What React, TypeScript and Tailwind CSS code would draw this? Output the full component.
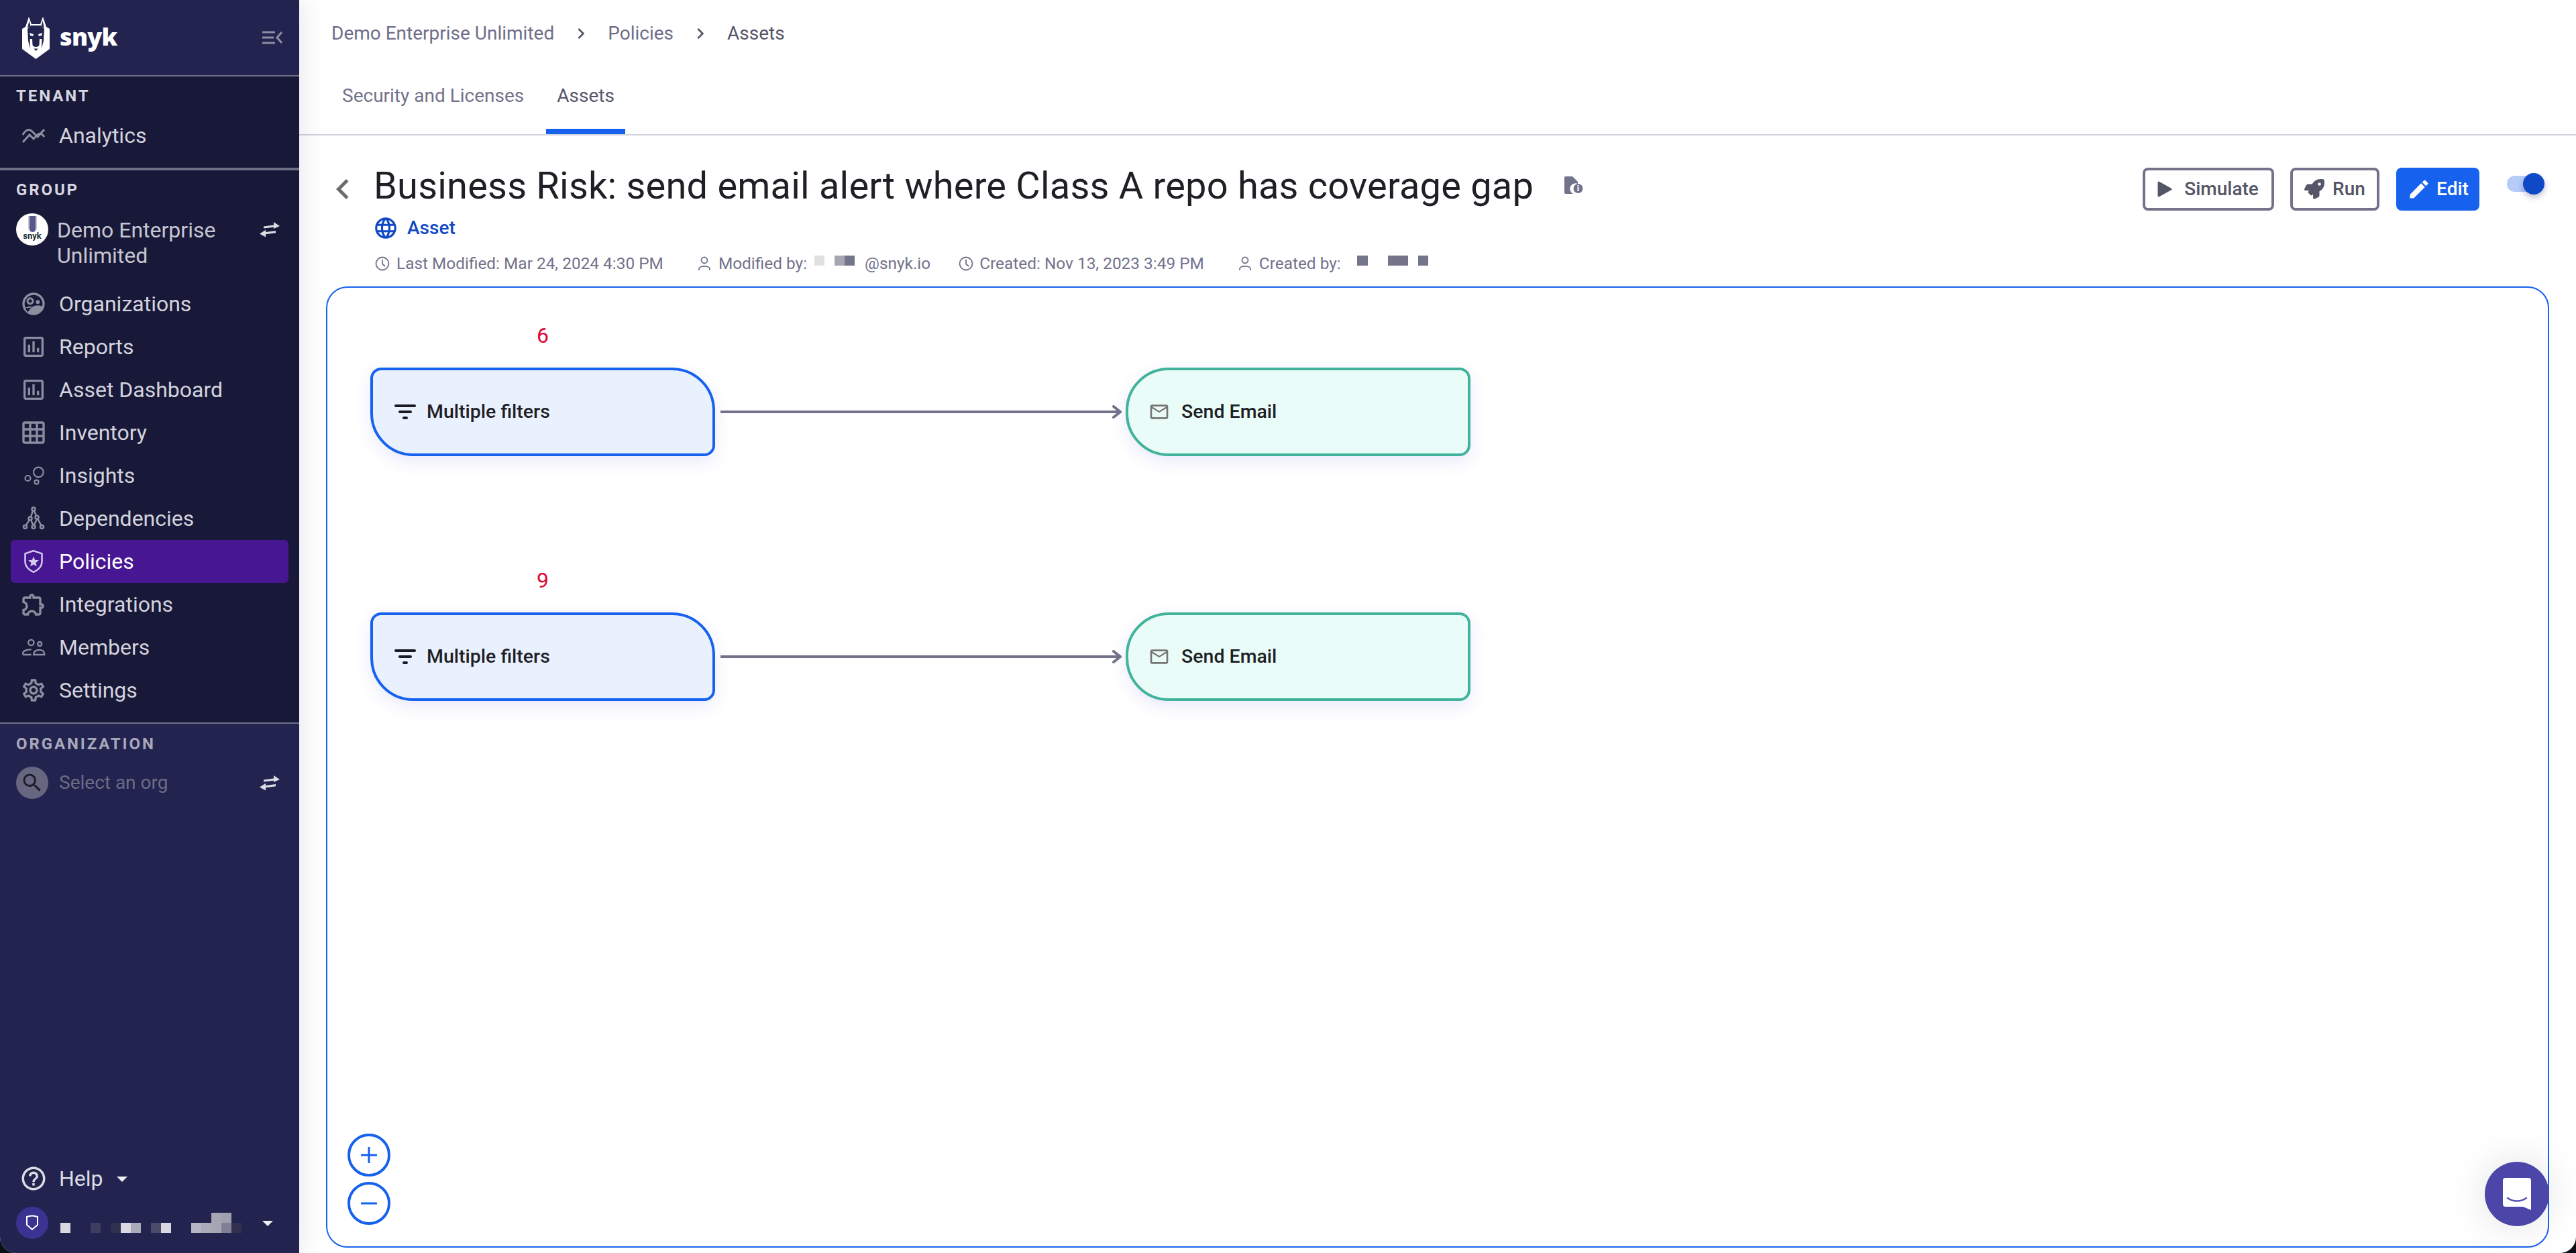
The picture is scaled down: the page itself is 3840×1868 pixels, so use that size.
import { ReactNode } from "react"
import {
  MdEdit,
  MdHelpOutline,
  MdLanguage,
  MdOutlineAssessment,
  MdOutlineExtension,
  MdOutlineSettings,
  MdGridOn,
  MdSearch,
  MdOutlineMailOutline,
  MdChevronLeft,
  MdChevronRight,
} from "react-icons/md"
import { FaRocket } from "react-icons/fa"

const iconClass = "w-10 h-10 text-[#8d8da1] shrink-0"

const OrgIcon = () => (
  <svg viewBox="0 0 24 24" className={iconClass} fill="currentColor">
    <path d="M12 2a10 10 0 1 0 0 20 10 10 0 0 0 0-20zm0 2a8 8 0 0 1 7.700 10.200c-1.600-.6-3-.8-4.200-.8-3 0-5.800 1.700-7.700 4.800-.4.500-.8.900-1.100 1.100A8 8 0 0 1 4.800 15.500c1.300-.8 2.800-1.200 4.200-1.200.5 0 1 .1 1.400.2-.3.300-.6.600-.8.900C6 15.500 5 16 4.800 15.500A8 8 0 0 1 12 4z" />
    <circle cx="9" cy="9.500" r="2.400" fill="none" stroke="currentColor" strokeWidth="1.800" />
    <circle cx="15.800" cy="10.300" r="1.700" />
  </svg>
)

const AnalyticsIcon = () => (
  <svg viewBox="0 0 34 24" className="w-[34px] h-6 mx-[3px] text-[#8d8da1] shrink-0" fill="none" stroke="currentColor" strokeWidth="3">
    <path d="M1 11 C6 2 11 2 15 6 L23 14 L33 3" />
    <path d="M1 22 L11 11 L17 17 L24 10 C27 8 30 10 33 14" />
  </svg>
)

const InsightsIcon = () => (
  <svg viewBox="0 0 24 24" className={iconClass} fill="none" stroke="currentColor" strokeWidth="1.300">
    <circle cx="16.400" cy="9" r="4.400" />
    <circle cx="6.900" cy="14.400" r="2.400" />
    <circle cx="14.700" cy="17.800" r="1.800" />
  </svg>
)

const DependenciesIcon = () => (
  <svg viewBox="0 0 24 24" className={iconClass} fill="none" stroke="currentColor" strokeWidth="1.500">
    <circle cx="12" cy="3.600" r="1.500" />
    <circle cx="9" cy="12" r="1.500" />
    <circle cx="15" cy="11" r="1.500" />
    <circle cx="4.500" cy="19.500" r="1.500" />
    <circle cx="12" cy="19.500" r="1.500" />
    <circle cx="19.500" cy="19.500" r="1.500" />
    <path d="M11.400 5 L9.600 10.600 M12.600 5 L14.400 9.600 M8.200 13.300 L5.200 18.200 M9.700 13.300 L11.700 18 M15.800 12.300 L18.800 18.200 M15 12.500 L12.400 18" />
  </svg>
)

const PolicyIcon = () => (
  <svg viewBox="0 0 24 24" className="w-10 h-10 text-[#d5cbea] shrink-0">
    <path d="M12 2.500 L19.500 5 V12 C19.500 16.500 16 20 12 21.500 C8 20 4.500 16.500 4.500 12 V5 Z" fill="none" stroke="currentColor" strokeWidth="1.500" />
    <path d="M12 7.500 L13.300 10.700 L16.700 11 L14.100 13.200 L14.900 16.500 L12 14.700 L9.100 16.500 L9.900 13.200 L7.300 11 L10.700 10.700 Z" fill="currentColor" />
  </svg>
)

const MembersIcon = () => (
  <svg viewBox="0 0 24 24" className={iconClass} fill="none" stroke="currentColor" strokeWidth="1.400">
    <circle cx="9.800" cy="7.800" r="2.500" />
    <circle cx="17.500" cy="9" r="1.800" />
    <path d="M2.500 18.500 V17 C3 15 6.500 13.800 10 14 M2.500 18.600 H10" />
    <path d="M12 18.600 C12 15.500 14.500 14.300 17.500 14.300 C20 14.300 21.800 15.800 21.800 18.600 Z" />
  </svg>
)

const SwapIcon = ({ color = "#dcdce4" }: { color?: string }) => (
  <svg viewBox="0 0 30 24" className="w-[30px] h-6 shrink-0" fill={color}>
    <path d="M6 7.500 L21 5.500 V1 L30 7 L21 11 V8.700 L6 10.500 Z" />
    <path d="M24 14 L9 16 V12.800 L0 18.500 L9 23.500 V19.300 L24 17.200 Z" />
  </svg>
)

const Caret = () => <div className="w-0 h-0 border-x-[8px] border-x-transparent border-t-[8px] border-t-[#eeeef2]" />

const navItems: { label: string; icon: ReactNode; active?: boolean }[] = [
  { label: "Organizations", icon: <OrgIcon /> },
  { label: "Reports", icon: <MdOutlineAssessment className={iconClass} /> },
  { label: "Asset Dashboard", icon: <MdOutlineAssessment className={iconClass} /> },
  { label: "Inventory", icon: <MdGridOn className={iconClass} /> },
  { label: "Insights", icon: <InsightsIcon /> },
  { label: "Dependencies", icon: <DependenciesIcon /> },
  { label: "Policies", icon: <PolicyIcon />, active: true },
  { label: "Integrations", icon: <MdOutlineExtension className={iconClass} /> },
  { label: "Members", icon: <MembersIcon /> },
  { label: "Settings", icon: <MdOutlineSettings className={iconClass} /> },
]

const NavRow = ({ label, icon, active }: { label: string; icon: ReactNode; active?: boolean }) => (
  <div className={`h-16 mx-4 pl-[14px] flex items-center gap-[18px] rounded-md ${active ? "bg-[#471692] text-white" : "text-[#d3d3de]"}`}>
    {icon}
    <span className="text-[32px] leading-10">{label}</span>
  </div>
)

const SectionLabel = ({ children, className }: { children: ReactNode; className: string }) => (
  <div className={`text-2xl leading-6 font-bold tracking-[0.12em] px-6 ${className}`}>{children}</div>
)

const Logo = () => (
  <svg viewBox="0 0 41 63" className="w-[41px] h-[63px] shrink-0">
    {/* side panels and ears */}
    <path d="M10 0 L14 11 H27 L31 0 L36 15 L41 18 V48 L20.500 63 L0 48 V18 L5 15 Z" fill="#fff" />
    <path d="M10.500 6 L12.500 14 L8 17 Z M30.500 6 L28.500 14 L33 17 Z" fill="#232350" />
    {/* face */}
    <path d="M13.500 13 H27.500 L33 18 L32 36 L29 47 H12 L9 36 L8 18 Z" fill="#232350" />
    <path d="M11 24 L17 26 L16 29 L12 28 Z M30 24 L24 26 L25 29 L29 28 Z" fill="#fff" />
    <path d="M11.500 33 L15 33 L15.500 42 C16 44 18 45 20.500 45 C23 45 25 44 25.500 42 L26 33 L29.500 33 L29 46 L24 54 H17 L12 46 Z" fill="#fff" />
    <path d="M17.500 47.500 H23.500 L20.500 51 Z" fill="#232350" />
  </svg>
)

const Sidebar = () => (
  <aside className="w-[446px] h-full shrink-0 flex flex-col bg-[#232350] relative z-10 shadow-[0_0_36px_rgba(70,70,140,0.16)] font-['Roboto',sans-serif]">
    <div className="h-[114px] shrink-0 border-b-2 border-[#6f6f85] flex items-center pl-[33px] pr-[25px]">
      <Logo />
      <span className="ml-[15px] text-[36px] leading-[44px] font-extrabold tracking-[-0.02em] text-white font-['Open_Sans',sans-serif] mb-[2px]">snyk</span>
      <svg viewBox="0 0 30 20" className="w-[30px] h-5 ml-auto" fill="none" stroke="#8d8da1" strokeWidth="3">
        <path d="M0 2 H19 M0 10 H17 M0 18 H19 M29 2 L22 10 L29 18" />
      </svg>
    </div>
    <div className="h-[140px] shrink-0 bg-[#181838] border-b-4 border-[#6f6f85] pt-[17px]">
      <SectionLabel className="text-[#d6d6e0]">TENANT</SectionLabel>
      <div className="mt-[15px]">
        <NavRow label="Analytics" icon={<AnalyticsIcon />} />
      </div>
    </div>
    <div className="h-[825px] shrink-0 bg-[#181838] border-b-2 border-[#6f6f85] pt-[17px]">
      <SectionLabel className="text-[#d6d6e0]">GROUP</SectionLabel>
      <div className="flex items-start mt-[23px] pl-6 pr-[29px] h-[103px]">
        <div className="w-12 h-12 rounded-full bg-white flex flex-col items-center shrink-0 overflow-hidden pt-[4px]">
          <div className="w-[13px] h-[24px] bg-[#57578a] rounded-b-md border-x-2 border-[#c9c9d4]" />
          <span className="text-[13px] leading-[12px] font-bold text-[#1c3038]">snyk</span>
        </div>
        <div className="ml-[13px] text-[32px] leading-[38px] text-[#c6c6d2] mt-[6px] w-[260px]">Demo Enterprise Unlimited</div>
        <div className="ml-auto mt-[12px]">
          <SwapIcon />
        </div>
      </div>
      {navItems.map((item) => (
        <NavRow key={item.label} {...item} />
      ))}
    </div>
    <div className="flex-1 flex flex-col">
      <SectionLabel className="text-[#a8a8ba] mt-[18px]">ORGANIZATION</SectionLabel>
      <div className="flex items-center mt-[22px] pl-6 pr-[29px]">
        <div className="w-12 h-12 rounded-full bg-[#666680] flex items-center justify-center">
          <MdSearch className="w-9 h-9 text-[#1d1d2c]" />
        </div>
        <span className="ml-4 text-[28px] text-[#6c6c85]">Select an org</span>
        <div className="ml-auto">
          <SwapIcon />
        </div>
      </div>
      <div className="mt-auto flex items-center pl-[29px] h-10 mb-[22px]">
        <MdHelpOutline className="w-[42px] h-[42px] text-[#dcdce4]" />
        <span className="ml-[17px] text-[32px] leading-10 text-[#dcdce4]">Help</span>
        <div className="ml-[20px] mt-[1px]">
          <Caret />
        </div>
      </div>
      <div className="flex items-center pl-6 mb-[21px] h-12">
        <div className="w-12 h-12 rounded-full bg-[#3a3391] flex items-center justify-center">
          <svg viewBox="0 0 20 24" className="w-5 h-6" fill="none" stroke="#fff" strokeWidth="2">
            <path d="M2 3 C7 1 13 1 18 3 V15 L10 22 L2 15 Z" />
          </svg>
        </div>
        <div className="ml-[18px] grid grid-cols-[repeat(18,15px)] grid-rows-[15px_15px]">
          {userBlocks.map((c, i) => (
            <div key={i} style={{ backgroundColor: c }} />
          ))}
        </div>
        <div className="ml-[31px] mt-[1px]">
          <Caret />
        </div>
      </div>
    </div>
  </aside>
)

const t = "transparent"
const userBlocks = [
  t, t, t, t, t, t, t, t, t, t, t, t, t, t, t, "#a5a5b3", "#a0a0ae", t,
  "#d8d8e0", t, t, "#3d3d5f", t, "#30304f", "#d8d8e0", "#aaaab8", t, "#4a4a6b", "#d8d8e0", t, t, "#b5b5c3", "#aaaab8", "#a5a5b3", "#7f7f95", "#31314f",
]

const Breadcrumbs = () => (
  <div className="h-[98px] flex items-center pl-12 pt-[1px] text-[28px] text-[#6e6e88]">
    <span>Demo Enterprise Unlimited</span>
    <MdChevronRight className="w-8 h-8 mx-6 text-[#555568]" />
    <span>Policies</span>
    <MdChevronRight className="w-8 h-8 mx-6 text-[#555568]" />
    <span className="text-[#555568]">Assets</span>
  </div>
)

const Tabs = () => (
  <div className="h-[104px] border-b-2 border-[#d3d3de] flex pl-[47px] gap-4 text-[28px]">
    <div className="px-[17px] pt-[24px] text-[#72728a]">Security and Licenses</div>
    <div className="px-[16px] pt-[24px] text-[#555568] border-b-8 border-[#1661ee]">Assets</div>
  </div>
)

const ClockIcon = () => (
  <svg viewBox="0 0 22 22" className="w-[22px] h-[22px] shrink-0" fill="none" stroke="#72728a" strokeWidth="1.800">
    <circle cx="11" cy="11" r="9.500" />
    <path d="M11 5 V11.500 L15 15" />
  </svg>
)

const PersonIcon = () => (
  <svg viewBox="0 0 18 22" className="w-[18px] h-[22px] shrink-0" fill="none" stroke="#72728a" strokeWidth="1.800">
    <circle cx="9" cy="6" r="4.500" />
    <path d="M1 21 V19 C1 13.500 17 13.500 17 19 V21" />
  </svg>
)

const Block = ({ w, c }: { w: number; c: string }) => <span className="h-[15px] mt-[-9px]" style={{ width: w, backgroundColor: c }} />

const Meta = () => (
  <div className="flex items-center mt-[21px] ml-[2px] h-8 text-[24.400px] text-[#72728a]">
    <ClockIcon />
    <span className="ml-[10px]">Last Modified: Mar 24, 2024 4:30 PM</span>
    <span className="ml-[52px] flex">
      <PersonIcon />
    </span>
    <span className="ml-[12px]">Modified by:</span>
    <span className="ml-[11px] flex items-center">
      <Block w={15} c="#e0e0e0" />
      <span className="w-[15px]" />
      <Block w={15} c="#a6a6b2" />
      <Block w={15} c="#74748a" />
    </span>
    <span className="ml-[15px]">@snyk.io</span>
    <span className="ml-[42px] flex">
      <ClockIcon />
    </span>
    <span className="ml-[9px]">Created: Nov 13, 2023 3:49 PM</span>
    <span className="ml-[52px] flex">
      <PersonIcon />
    </span>
    <span className="ml-[12px]">Created by:</span>
    <span className="ml-[24px] flex items-center">
      <Block w={16} c="#74748a" />
      <span className="w-[30px]" />
      <Block w={30} c="#74748a" />
      <span className="w-[15px]" />
      <Block w={15} c="#74748a" />
    </span>
  </div>
)

const OutlineButton = ({ w, icon, label }: { w: string; icon: ReactNode; label: string }) => (
  <div className={`${w} h-16 border-4 border-[#72728a] rounded-lg flex items-center justify-center gap-3 text-[28px] font-medium text-[#555568]`}>
    {icon}
    <span>{label}</span>
  </div>
)

const TitleBar = () => (
  <div className="h-[225px] shrink-0 flex justify-between pl-[43px] pr-[47px]">
    <div className="flex items-start">
      <MdChevronLeft className="w-[60px] h-[60px] text-[#6b6b6b] mt-[50px] -ml-[8px] -mr-[1px]" />
      <div className="ml-[17px] pt-[43px]">
        <div className="flex items-center h-[64px]">
          <h1 className="text-[56px] leading-[64px] text-[#1f1f26] tracking-[0.0035em]">Business Risk: send email alert where Class A repo has coverage gap</h1>
          <svg viewBox="0 0 28 26" className="w-7 h-[26px] ml-[46px] mt-[-2px]" fill="#72728a">
            <path d="M2 0 H12 L20 8 V11 A8 8 0 0 0 13 26 H2 Q0 26 0 24 V2 Q0 0 2 0 Z" />
            <circle cx="20.500" cy="18" r="7" />
            <rect x="19.500" y="16" width="2" height="6" fill="#fff" />
            <rect x="19.500" y="13" width="2" height="2" fill="#fff" />
          </svg>
        </div>
        <div className="flex items-center gap-[13px] mt-[15px] h-8 text-[#1049c6]">
          <MdLanguage className="w-[38px] h-[38px] -ml-[1px]" />
          <span className="text-[28px] font-medium">Asset</span>
        </div>
        <Meta />
      </div>
    </div>
    <div className="flex items-start pt-[48px]">
      <OutlineButton
        w="w-[196px]"
        label="Simulate"
        icon={
          <svg viewBox="0 0 22 24" className="w-[22px] h-6 mr-[6px] -ml-[1px]" fill="#555568" stroke="#555568" strokeWidth="3" strokeLinejoin="round">
            <path d="M2 2 L20 12 L2 22 Z" />
          </svg>
        }
      />
      <div className="ml-6">
        <OutlineButton w="w-[133px]" label="Run" icon={<FaRocket className="w-[30px] h-[30px]" />} />
      </div>
      <div className="ml-[25px] w-[124px] h-16 rounded-lg bg-[#1661ee] text-white flex items-center justify-center gap-[8px] text-[28px] font-medium">
        <MdEdit className="w-9 h-9" />
        <span>Edit</span>
      </div>
      <div className="relative ml-[41px] mt-3 w-[56px] h-6 rounded-full bg-[#b5cbf8]">
        <div className="absolute -top-1 right-0 w-8 h-8 rounded-full bg-[#1049c6] shadow-[0_4px_8px_rgba(40,40,100,0.3)]" />
      </div>
    </div>
  </div>
)

const FlowNode = ({ kind, left, top }: { kind: "filter" | "email"; left: string; top: string }) =>
  kind === "filter" ? (
    <div className={`absolute ${left} ${top} w-[514px] h-[132px] border-4 border-[#1661ee] bg-[#eaf1fe] rounded-tl-2xl rounded-tr-[64px] rounded-br-2xl rounded-bl-[64px] shadow-[0_8px_24px_rgba(70,70,220,0.12)] flex items-center pl-8 gap-4 text-[28.500px] font-medium text-[#1f1f26]`}>
      <svg viewBox="0 0 32 22" className="w-8 h-[22px] shrink-0" fill="#1a1a22">
        <rect x="0" y="0" width="32" height="4" rx="2" />
        <rect x="6" y="9" width="20" height="4" rx="2" />
        <rect x="12" y="18" width="8" height="4" rx="2" />
      </svg>
      <span>Multiple filters</span>
    </div>
  ) : (
    <div className={`absolute ${left} ${top} w-[514px] h-[132px] border-4 border-[#42b39b] bg-[#eafcf8] rounded-tl-[64px] rounded-tr-2xl rounded-br-2xl rounded-bl-[64px] shadow-[0_8px_24px_rgba(70,70,220,0.12)] flex items-center pl-[30px] gap-[17px] text-[28.500px] font-medium text-[#1f1f26]`}>
      <MdOutlineMailOutline className="w-8 h-8 text-[#757575] shrink-0" />
      <span>Send Email</span>
    </div>
  )

const Edge = ({ top }: { top: string }) => (
  <svg viewBox="0 0 598 20" className={`absolute left-[586px] ${top} w-[598px] h-5`} fill="none" stroke="#72728a">
    <path d="M0 10 H596" strokeWidth="4" />
    <path d="M586 2 L596 10 L586 18" strokeWidth="4" strokeLinecap="round" />
  </svg>
)

const ZoomButton = ({ minus }: { minus?: boolean }) => (
  <div className="w-16 h-16 rounded-full border-4 border-[#1661ee] flex items-center justify-center">
    <svg viewBox="0 0 24 24" className="w-6 h-6" stroke="#1661ee" strokeWidth="3" strokeLinecap="round">
      <path d={minus ? "M1 12 H23" : "M1 12 H23 M12 1 V23"} />
    </svg>
  </div>
)

const Canvas = () => (
  <div className="relative flex-1 ml-10 mr-10 mb-2 border-2 border-[#1661ee] rounded-[32px] bg-white">
    <div className="absolute left-[64px] top-[51px] w-[514px] text-center text-[32px] leading-10 text-[#dc0530]">6</div>
    <FlowNode kind="filter" left="left-[64px]" top="top-[119px]" />
    <Edge top="top-[175px]" />
    <FlowNode kind="email" left="left-[1190px]" top="top-[119px]" />
    <div className="absolute left-[64px] top-[416px] w-[514px] text-center text-[32px] leading-10 text-[#dc0530]">9</div>
    <FlowNode kind="filter" left="left-[64px]" top="top-[484px]" />
    <Edge top="top-[540px]" />
    <FlowNode kind="email" left="left-[1190px]" top="top-[484px]" />
    <div className="absolute left-[30px] bottom-[32px] flex flex-col gap-2">
      <ZoomButton />
      <ZoomButton minus />
    </div>
  </div>
)

const ChatBubble = () => (
  <div className="absolute right-10 bottom-10 w-24 h-24 rounded-full bg-[#4c46a8] shadow-[0_0_60px_rgba(0,0,0,0.12)] flex items-center justify-center z-20">
    <svg viewBox="0 0 42 48" className="w-[42px] h-12">
      <path d="M4 0 H38 Q42 0 42 4 V48 L30 43 H4 Q0 43 0 39 V4 Q0 0 4 0 Z" fill="#fff" />
      <path d="M7 30 C15 36 27 36 35 30" fill="none" stroke="#5a54b4" strokeWidth="2.500" strokeLinecap="round" />
    </svg>
  </div>
)

export default function App() {
  return (
    <div className="h-screen w-full bg-[#0a1016]">
      <div className="relative h-full flex overflow-hidden rounded-b-[24px] bg-white font-['Roboto',sans-serif]">
        <Sidebar />
        <main className="flex-1 min-w-0 flex flex-col">
          <Breadcrumbs />
          <Tabs />
          <TitleBar />
          <Canvas />
        </main>
        <ChatBubble />
      </div>
    </div>
  )
}
